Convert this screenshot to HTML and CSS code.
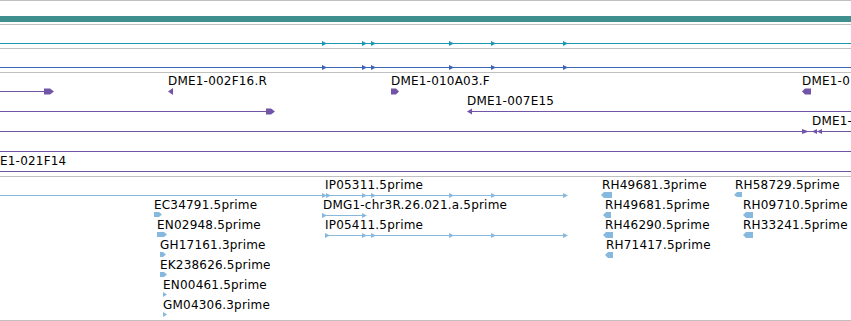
FILE: index.html
```html
<!DOCTYPE html>
<html lang="en">

<head>
    <meta charset="UTF-8">
    <title>Genome browser tracks</title>
    <link rel="stylesheet" href="styles.css">
</head>

<body>
    <div class="browser">
        <!-- reference sequence -->
        <div class="track track-ref">
            <div class="ref-bar"></div>
        </div>

        <!-- gene models -->
        <div class="track track-small">
            <svg width="851" height="23" class="teal">
                <line x1="0" y1="18.5" x2="851" y2="18.5" />
                <polygon points="322,16 327,18.5 322,21" />
                <polygon points="362,16 367,18.5 362,21" />
                <polygon points="371,16 376,18.5 371,21" />
                <polygon points="449,16 454,18.5 449,21" />
                <polygon points="491,16 496,18.5 491,21" />
                <polygon points="563,16 568,18.5 563,21" />
            </svg>
        </div>

        <div class="track track-small">
            <svg width="851" height="23" class="blue">
                <line x1="0" y1="18.5" x2="851" y2="18.5" />
                <polygon points="322,16 327,18.5 322,21" />
                <polygon points="362,16 367,18.5 362,21" />
                <polygon points="371,16 376,18.5 371,21" />
                <polygon points="449,16 454,18.5 449,21" />
                <polygon points="491,16 496,18.5 491,21" />
                <polygon points="563,16 568,18.5 563,21" />
            </svg>
        </div>

        <!-- BAC ends -->
        <div class="track track-bac">
            <svg width="851" height="103" class="purple">
                <line x1="0" y1="18.5" x2="46" y2="18.5" />
                <polygon points="44,15.5 50,15.5 54,18.5 50,21.5 44,21.5" />
                <text x="168" y="12">DME1-002F16.R</text>
                <polygon points="168,18.5 173,15 173,22" />
                <text x="391" y="12">DME1-010A03.F</text>
                <polygon points="391,15.5 396,15.5 399,18.5 396,21.5 391,21.5" />
                <text x="802" y="12">DME1-0</text>
                <polygon points="802,18.5 805,15.5 811,15.5 811,21.5 805,21.5" />

                <line x1="0" y1="38.5" x2="268" y2="38.5" />
                <polygon points="266,35.5 271,35.5 275,38.5 271,41.5 266,41.5" />
                <text x="467" y="32">DME1-007E15</text>
                <line x1="469" y1="38.5" x2="851" y2="38.5" />
                <polygon points="467,38.5 472,35.5 472,41.5" />

                <line x1="0" y1="58.5" x2="851" y2="58.5" />
                <polygon points="802,56 809,58.5 802,61" />
                <polygon points="812,58.5 817,56 817,61" />
                <polygon points="817,58.5 822,56 822,61" />
                <text x="812" y="52">DME1-</text>

                <line x1="0" y1="78.5" x2="851" y2="78.5" />

                <text x="-20" y="92">DME1-021F14</text>
                <line x1="0" y1="98.5" x2="851" y2="98.5" />
            </svg>
        </div>

        <!-- ESTs -->
        <div class="track track-est">
            <svg width="851" height="143" class="light">
                <line x1="0" y1="18.5" x2="567" y2="18.5" />
                <polygon points="322,16 327,18.5 322,21" />
                <polygon points="326,16 331,18.5 326,21" />
                <polygon points="362,16 367,18.5 362,21" />
                <polygon points="371,16 376,18.5 371,21" />
                <polygon points="449,16 454,18.5 449,21" />
                <polygon points="491,16 496,18.5 491,21" />
                <polygon points="563,16 568,18.5 563,21" />
                <text x="325" y="12">IP05311.5prime</text>
                <text x="602" y="12">RH49681.3prime</text>
                <polygon points="601,18 604,15 612,15 612,21 604,21" />
                <text x="735" y="12">RH58729.5prime</text>
                <polygon points="734,18 737,15 742,15 742,20 737,20" />

                <text x="154" y="32">EC34791.5prime</text>
                <polygon points="154,35 159,35 162,37.5 159,40 154,40" />
                <text x="323" y="32">DMG1-chr3R.26.021.a.5prime</text>
                <line x1="323" y1="38.5" x2="366" y2="38.5" />
                <polygon points="322,36 327,38.5 322,41" />
                <polygon points="362,36 367,38.5 362,41" />
                <text x="605" y="32">RH49681.5prime</text>
                <polygon points="603,38 606,35 611,35 611,41 606,41" />
                <text x="743" y="32">RH09710.5prime</text>
                <polygon points="743,38 746,35 753,35 753,41 746,41" />

                <text x="157" y="52">EN02948.5prime</text>
                <polygon points="157,55 164,55 167,57.5 164,60 157,60" />
                <text x="325" y="52">IP05411.5prime</text>
                <line x1="325" y1="58.5" x2="567" y2="58.5" />
                <polygon points="325,56 330,58.5 325,61" />
                <polygon points="362,56 367,58.5 362,61" />
                <polygon points="371,56 376,58.5 371,61" />
                <polygon points="449,56 454,58.5 449,61" />
                <polygon points="491,56 496,58.5 491,61" />
                <polygon points="563,56 568,58.5 563,61" />
                <text x="605" y="52">RH46290.5prime</text>
                <polygon points="603,58 606,55 613,55 613,61 606,61" />
                <text x="743" y="52">RH33241.5prime</text>
                <polygon points="743,58 746,55 753,55 753,61 746,61" />

                <text x="160" y="72">GH17161.3prime</text>
                <polygon points="160,75 163,75 166,77.5 163,80 160,80" />
                <text x="606" y="72">RH71417.5prime</text>
                <polygon points="605,78 608,75 613,75 613,81 608,81" />

                <text x="160" y="92">EK238626.5prime</text>
                <polygon points="160,95 164,95 167,97.5 164,100 160,100" />

                <text x="163" y="112">EN00461.5prime</text>
                <polygon points="163,115 167,117.5 163,120" />

                <text x="163" y="132">GM04306.3prime</text>
                <polygon points="163,135 167,137.5 163,140" />
            </svg>
        </div>
    </div>
</body>

</html>
```

FILE: styles.css
```css
body {
    margin: 0;
    padding: 0;
    background-color: #fff;
    font-family: "DejaVu Sans", sans-serif;
    font-size: 12px;
}

.browser {
    width: 851px;
    overflow: hidden;
}

.track {
    position: relative;
    border-top: 1px solid #c0c0c0;
    overflow: hidden;
}

.track svg {
    display: block;
    overflow: hidden;
}

.track text {
    font-family: "DejaVu Sans", sans-serif;
    font-size: 12px;
    letter-spacing: 0.2px;
    fill: #000;
    stroke: none;
}

.track-ref {
    height: 23px;
}

.ref-bar {
    margin-top: 15px;
    height: 6px;
    background-color: #408f8f;
}

.track-small {
    height: 23px;
}

.track-bac {
    height: 103px;
}

.track-est {
    height: 143px;
    border-bottom: 1px solid #c0c0c0;
}

/* feature colours per track */
.teal line { stroke: #1c97b3; stroke-width: 1; }
.teal polygon { fill: #1c97b3; }

.blue line { stroke: #3a64b8; stroke-width: 1; }
.blue polygon { fill: #3a64b8; }

.purple line { stroke: #7355a8; stroke-width: 1; }
.purple polygon { fill: #7355a8; }

.light line { stroke: #86b9dd; stroke-width: 1; }
.light polygon { fill: #86b9dd; }
```
